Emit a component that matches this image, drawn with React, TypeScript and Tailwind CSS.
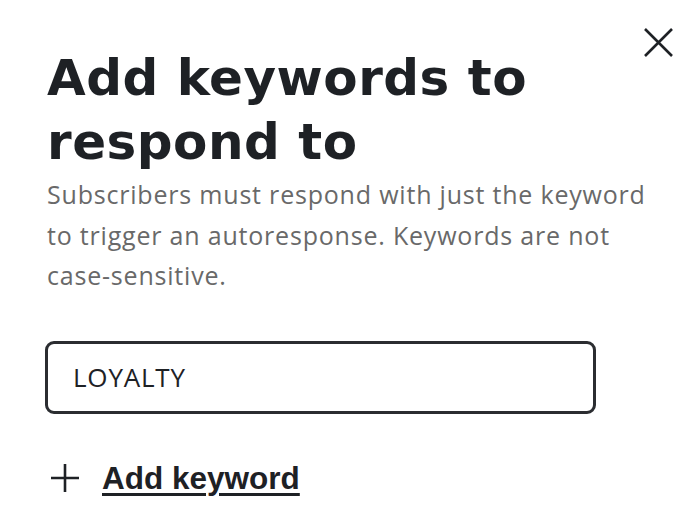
import React from 'react';

const CloseIcon = () => (
  <svg width="33" height="33" viewBox="0 0 33 33" fill="none" stroke="#1e2125" strokeWidth="2.6">
    <path d="M3 3L30 30M30 3L3 30" />
  </svg>
);

const PlusIcon = () => (
  <svg width="32" height="32" viewBox="0 0 32 32" fill="none" stroke="#1e2125" strokeWidth="2.6">
    <path d="M16 2V30M2 16H30" />
  </svg>
);

export default function App() {
  return (
    <div className="relative w-[700px] h-[526px] bg-white overflow-hidden">
      <button className="absolute left-[642px] top-[26px]" aria-label="Close">
        <CloseIcon />
      </button>

      <div className="pl-[47px] pt-[46px] pr-[30px]">
        <h1
          className="text-[50px] leading-[64px] font-bold tracking-[0.5px] text-[#1e2125]"
          style={{ fontFamily: '"DejaVu Sans", sans-serif' }}
        >
          Add keywords to
          <br />
          respond to
        </h1>
        <p
          className="text-[25px] leading-[40.5px] tracking-[0.8px] text-[#696969] w-[620px]"
          style={{ fontFamily: '"Open Sans", sans-serif' }}
        >
          Subscribers must respond with just the keyword to trigger an autoresponse. Keywords are not case-sensitive.
        </p>

        <div className="mt-[45px] -ml-[2px] w-[551px] h-[73px] border-[3px] border-[#2b2d31] rounded-[9px] flex items-center pl-[25px]">
          <span
            className="text-[26px] tracking-[0.8px] text-[#1e2125]"
            style={{ fontFamily: '"Open Sans", sans-serif' }}
          >
            LOYALTY
          </span>
        </div>

        <button className="mt-[44px] flex items-center gap-[21px] pl-[2px]">
          <PlusIcon />
          <span
            className="text-[31.5px] leading-[40px] font-bold text-[#1e2125] underline underline-offset-[4px] decoration-[3px]"
            style={{ fontFamily: '"Liberation Sans", sans-serif' }}
          >
            Add keyword
          </span>
        </button>
      </div>
    </div>
  );
}
